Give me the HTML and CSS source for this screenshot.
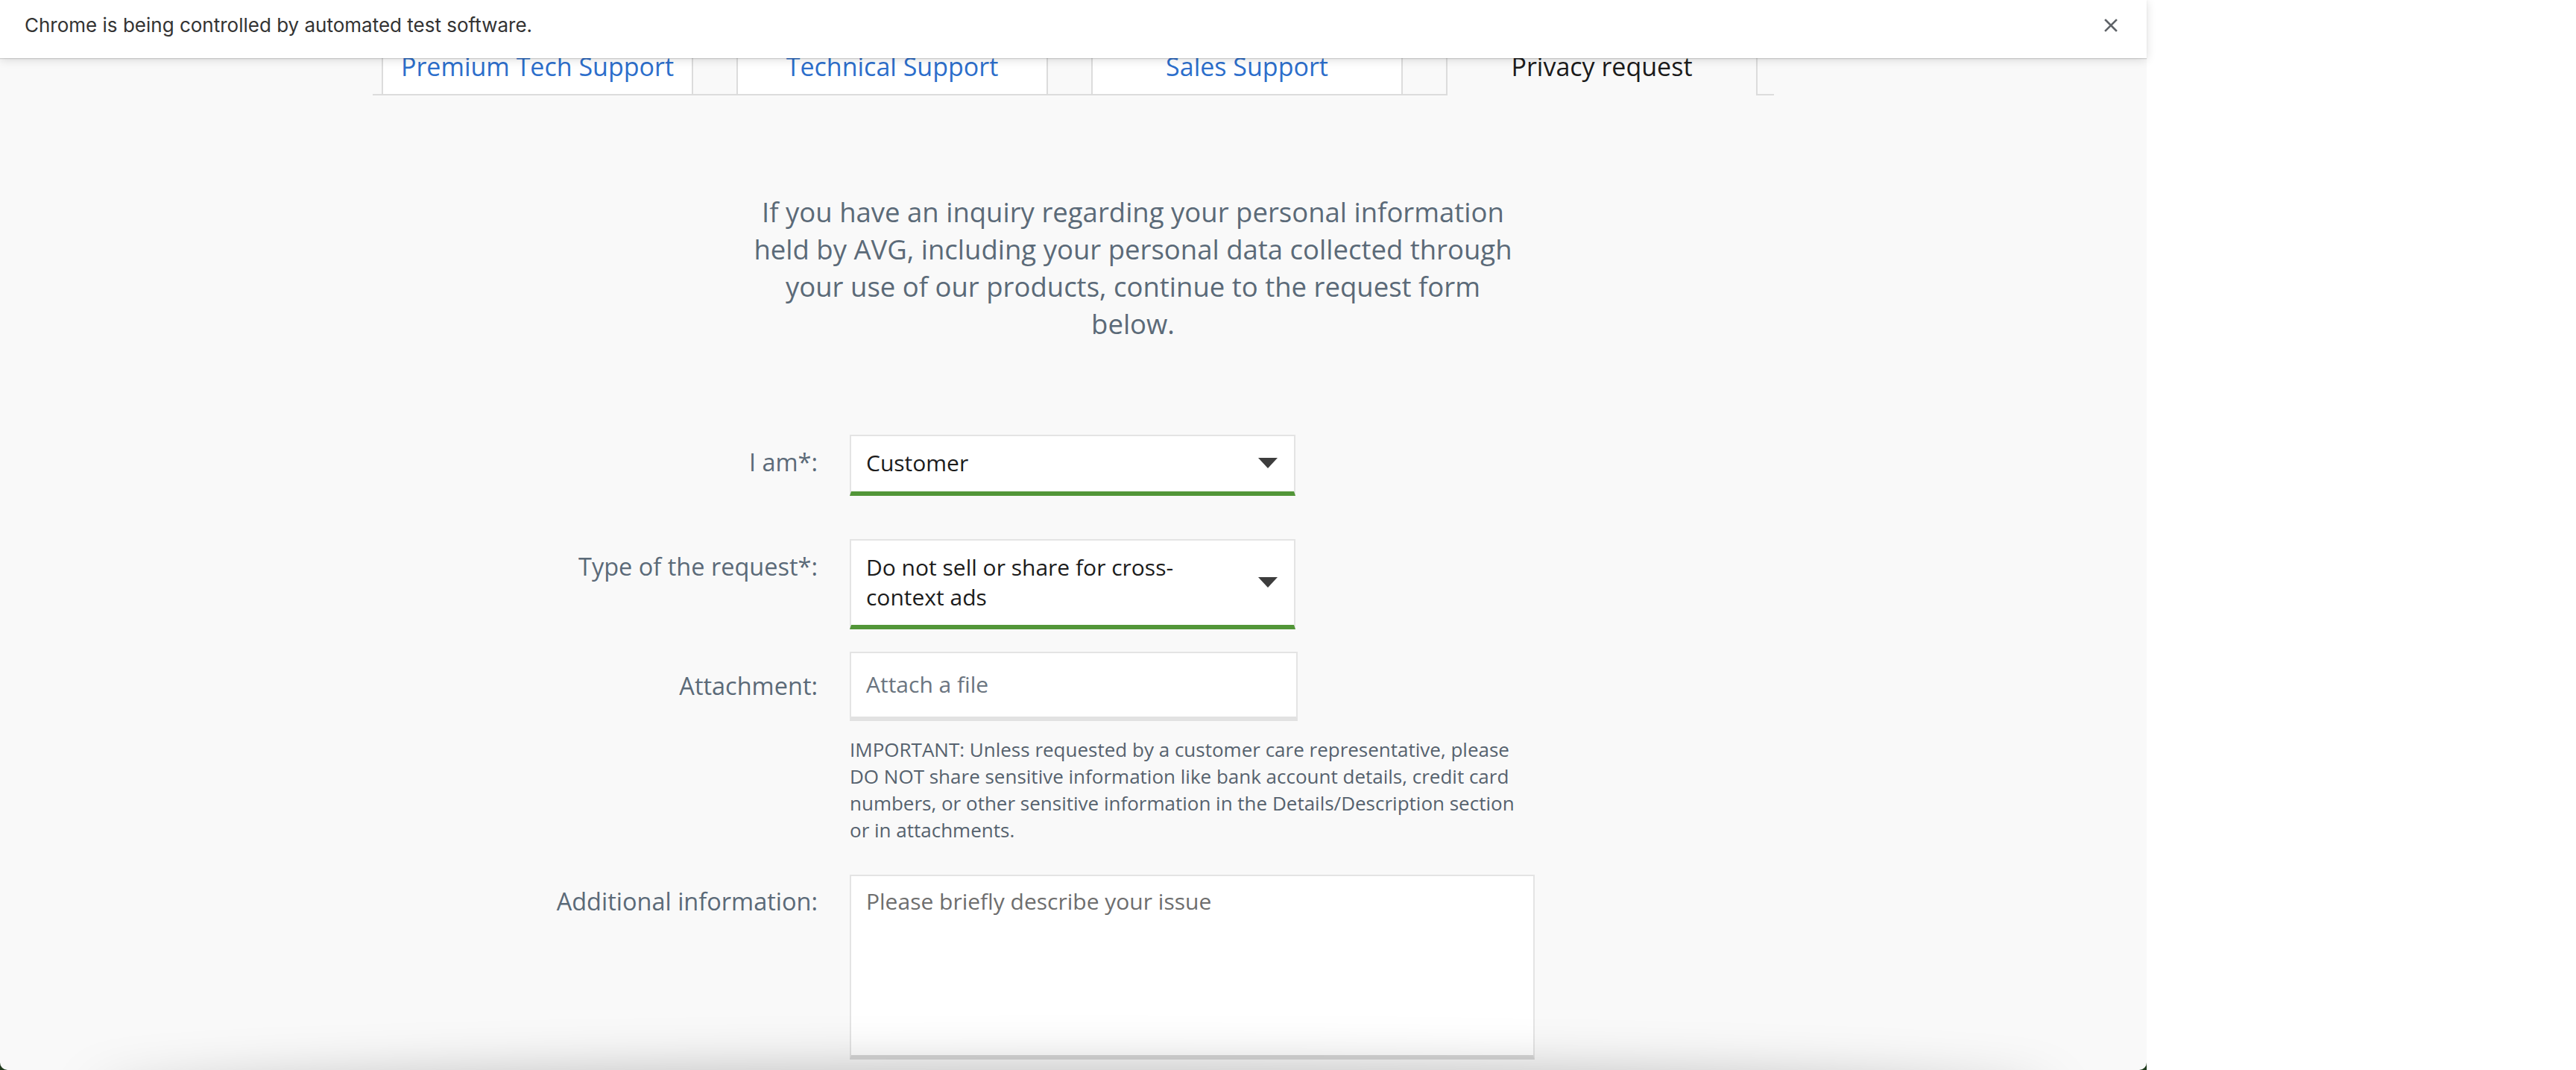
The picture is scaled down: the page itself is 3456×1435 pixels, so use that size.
FILE: index.html
```html
<!DOCTYPE html>
<html lang="en">
<head>
<meta charset="utf-8">
<title>Privacy request – AVG Support</title>
<link rel="stylesheet" href="styles.css">
</head>
<body>
<div class="window">
  <div class="infobar">
    <span class="infobar-text">Chrome is being controlled by automated test software.</span>
    <button class="infobar-close" type="button" aria-label="Close">
      <svg width="18" height="18" viewBox="0 0 18 18"><path d="M2 2 L16 16 M16 2 L2 16" stroke="#5f6368" stroke-width="2.6" stroke-linecap="square" fill="none"/></svg>
    </button>
  </div>
  <main class="viewport">
    <div class="page">
      <nav class="tabs">
        <a class="tab" href="#">Premium Tech Support</a>
        <a class="tab" href="#">Technical Support</a>
        <a class="tab" href="#">Sales Support</a>
        <a class="tab tab-active" href="#">Privacy request</a>
      </nav>

      <div class="intro-wrap">
        <p class="intro">If you have an inquiry regarding your personal information<br>held by AVG, including your personal data collected through<br>your use of our products, continue to the request form<br>below.</p>
      </div>

      <form class="form">
        <label class="label label-select">I am*:</label>
        <div class="select select-first">
          <span class="select-value">Customer</span>
          <svg class="caret" width="26" height="14" viewBox="0 0 26 14"><path d="M0 0 H26 L13 14 Z" fill="#3d3d3d"/></svg>
        </div>

        <label class="label label-select">Type of the request*:</label>
        <div class="select select-second">
          <span class="select-value">Do not sell or share for cross-<br>context ads</span>
          <svg class="caret" width="26" height="14" viewBox="0 0 26 14"><path d="M0 0 H26 L13 14 Z" fill="#3d3d3d"/></svg>
        </div>

        <label class="label label-attach">Attachment:</label>
        <div class="attach"><span class="placeholder">Attach a file</span></div>

        <p class="note">IMPORTANT: Unless requested by a customer care representative, please<br>DO NOT share sensitive information like bank account details, credit card<br>numbers, or other sensitive information in the Details/Description section<br>or in attachments.</p>

        <label class="label label-area">Additional information:</label>
        <div class="textarea"><span class="placeholder placeholder-area">Please briefly describe your issue</span></div>
      </form>
    </div>
  </main>
</div>
</body>
</html>
```

FILE: styles.css
```css
* {
  box-sizing: border-box;
}

html,
body {
  margin: 0;
  padding: 0;
}

body {
  width: 3456px;
  height: 1435px;
  overflow: hidden;
  background: #ffffff;
  font-family: "Open Sans", "Noto Sans", sans-serif;
}

.window {
  width: 2880px;
  height: 1435px;
  display: flex;
  flex-direction: column;
  background: #1f3a1c;
}

/* Chrome automation infobar */
.infobar {
  position: relative;
  z-index: 2;
  flex: none;
  height: 78px;
  display: flex;
  align-items: flex-start;
  padding: 18px 39px 0 33px;
  background: #ffffff;
  box-shadow: 0 1px 1px rgba(0, 0, 0, 0.14), 0 2px 12px rgba(0, 0, 0, 0.14);
  font-family: Inter, "Liberation Sans", sans-serif;
  font-size: 26px;
  color: #333333;
}

.infobar-close {
  margin-left: auto;
  margin-top: 7px;
  width: 18px;
  height: 18px;
  padding: 0;
  border: 0;
  background: none;
  display: flex;
}

/* Page viewport */
.viewport {
  position: relative;
  flex: 1;
  overflow: hidden;
  background: #f9f9f9;
  border-radius: 0 0 10px 10px;
}

.viewport::after {
  content: "";
  position: absolute;
  left: 120px;
  right: 120px;
  top: 100%;
  height: 80px;
  border-radius: 50%;
  box-shadow: 0 0 70px rgba(0, 0, 0, 0.26);
  pointer-events: none;
}

.page {
  width: 1880px;
  margin: 0 auto;
}

/* Tabs */
.tabs {
  display: flex;
  align-items: flex-start;
  gap: 58px;
  padding: 0 22px 0 12px;
  margin-top: -52px;
  border-bottom: 2px solid #dcdcdc;
}

.tab {
  width: 418px;
  height: 100px;
  display: flex;
  align-items: flex-end;
  justify-content: center;
  padding-bottom: 17px;
  background: #ffffff;
  border-left: 2px solid #dcdcdc;
  border-right: 2px solid #dcdcdc;
  font-size: 34px;
  line-height: 40px;
  color: #2c6ecb;
  text-decoration: none;
}

.tab-active {
  height: 102px;
  margin-bottom: -2px;
  padding-bottom: 19px;
  background: #f9f9f9;
  color: #1b1b1b;
}

/* Intro */
.intro-wrap {
  margin-top: 131px;
  padding-left: 160px;
}

.intro {
  margin: 0;
  text-align: center;
  font-size: 36.5px;
  line-height: 50px;
  color: #5b6a78;
  white-space: nowrap;
}

/* Form */
.form {
  margin-top: 124px;
  display: grid;
  grid-template-columns: 597px 1fr;
  column-gap: 43px;
  align-items: start;
}

.label {
  grid-column: 1;
  text-align: right;
  font-size: 32.5px;
  line-height: 40px;
  color: #5b6a78;
}

.label-select {
  padding-top: 17px;
}

.label-attach {
  padding-top: 26px;
}

.label-area {
  padding-top: 16px;
}

.select {
  grid-column: 2;
  width: 598px;
  display: flex;
  align-items: center;
  justify-content: space-between;
  padding: 16px 22px 18px 20px;
  background: #ffffff;
  border: 2px solid #e4e4e4;
  border-bottom: 6px solid #529638;
  font-size: 30px;
  line-height: 40px;
  color: #1b1b1b;
}

.select-first {
  margin-bottom: 58px;
}

.select-second {
  padding-bottom: 17px;
  margin-bottom: 30px;
}

.caret {
  flex: none;
}

.attach {
  grid-column: 2;
  width: 601px;
  padding: 22px 20px 23px;
  background: #ffffff;
  border: 2px solid #e4e4e4;
  border-bottom: 6px solid #e2e2e2;
  font-size: 30px;
  line-height: 40px;
  margin-bottom: 20px;
}

.placeholder {
  color: #6b7580;
}

.placeholder-area {
  color: #6e6e6e;
}

.note {
  grid-column: 2;
  margin: 0 0 42px;
  font-size: 26px;
  line-height: 36px;
  color: #56626e;
  white-space: nowrap;
}

.textarea {
  grid-column: 2;
  width: 919px;
  height: 248px;
  padding: 14px 20px;
  background: #ffffff;
  border: 2px solid #e4e4e4;
  border-bottom: 6px solid #d8d8d8;
  font-size: 30px;
  line-height: 40px;
}
```
